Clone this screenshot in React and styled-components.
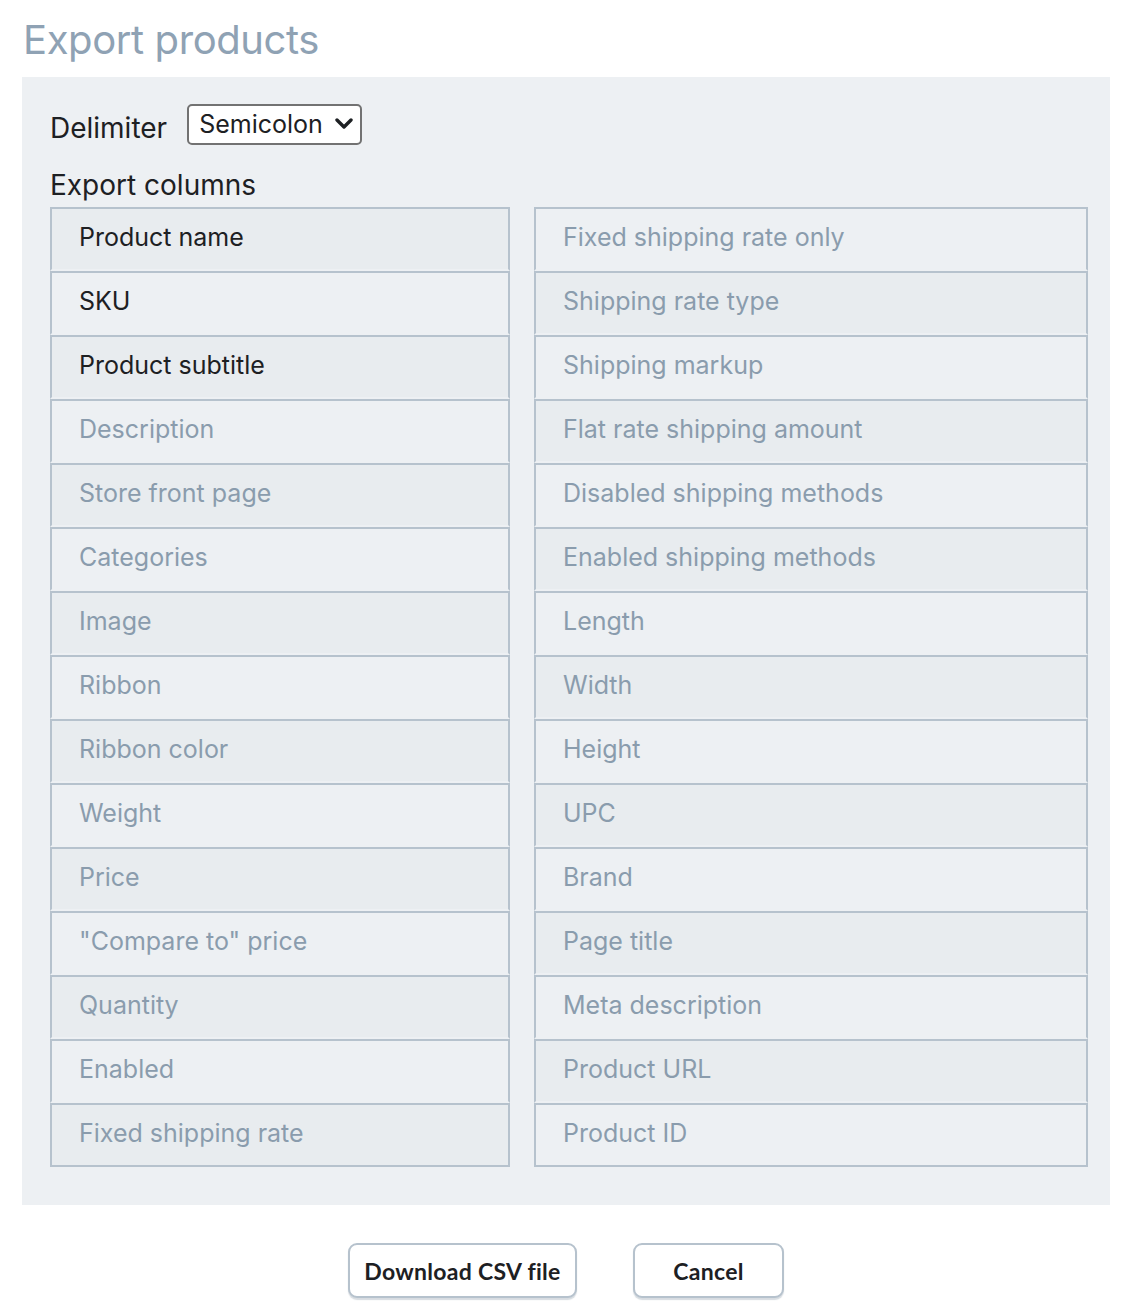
import React from 'react';
import styled, { createGlobalStyle } from 'styled-components';

const GlobalStyle = createGlobalStyle`
  * { box-sizing: border-box; }
  body {
    margin: 0;
    background: #fff;
    font-family: Inter, "Noto Sans", "Liberation Sans", sans-serif;
    color: #1d2023;
  }
`;

const columns = [
  { name: 'Product name', on: true },
  { name: 'SKU', on: true },
  { name: 'Product subtitle', on: true },
  { name: 'Description' },
  { name: 'Store front page' },
  { name: 'Categories' },
  { name: 'Image' },
  { name: 'Ribbon' },
  { name: 'Ribbon color' },
  { name: 'Weight' },
  { name: 'Price' },
  { name: '"Compare to" price' },
  { name: 'Quantity' },
  { name: 'Enabled' },
  { name: 'Fixed shipping rate' },
  { name: 'Fixed shipping rate only' },
  { name: 'Shipping rate type' },
  { name: 'Shipping markup' },
  { name: 'Flat rate shipping amount' },
  { name: 'Disabled shipping methods' },
  { name: 'Enabled shipping methods' },
  { name: 'Length' },
  { name: 'Width' },
  { name: 'Height' },
  { name: 'UPC' },
  { name: 'Brand' },
  { name: 'Page title' },
  { name: 'Meta description' },
  { name: 'Product URL' },
  { name: 'Product ID' },
];

const Chevron = () => (
  <svg width="18" height="12" viewBox="0 0 18 12" fill="none">
    <polyline points="2,2 9,9 16,2" stroke="#1d2023" strokeWidth="3.4" strokeLinecap="round" strokeLinejoin="round" />
  </svg>
);

const App = () => (
  <Page>
    <GlobalStyle />
    <Title>Export products</Title>
    <Panel>
      <DelimiterRow>
        <Label>Delimiter</Label>
        <Select>
          <span>Semicolon</span>
          <Chevron />
        </Select>
      </DelimiterRow>
      <SectionTitle>Export columns</SectionTitle>
      <ColumnGrid>
        {columns.map((c) => (
          <ColumnItem key={c.name} active={c.on}>
            {c.name}
          </ColumnItem>
        ))}
      </ColumnGrid>
    </Panel>
    <Actions>
      <Button>Download CSV file</Button>
      <Button wide>Cancel</Button>
    </Actions>
  </Page>
);

export default App;

const Page = styled.div`
  width: 1134px;
  padding: 0 24px 14px 22px;
`;

const Title = styled.h1`
  margin: 0;
  padding: 12px 0 0 1px;
  height: 77px;
  font-size: 40px;
  font-weight: 400;
  line-height: 56px;
  color: #8fa2b4;
  letter-spacing: -0.4px;
`;

const Panel = styled.div`
  background: #edf0f3;
  padding: 27px 22px 38px 28px;
`;

const DelimiterRow = styled.div`
  display: flex;
  align-items: center;
  gap: 20px;
  height: 40px;
`;

const Label = styled.span`
  font-size: 28px;
  line-height: 40px;
  padding-top: 8px;
  color: #1d2023;
`;

const Select = styled.div`
  display: flex;
  align-items: center;
  justify-content: space-between;
  width: 175px;
  height: 41px;
  padding: 0 7px 0 10px;
  background: #fff;
  border: 2px solid #727272;
  border-radius: 5px;
  font-size: 25px;
  color: #1d2023;
`;

const SectionTitle = styled.div`
  font-size: 28px;
  line-height: 36px;
  margin-top: 23px;
  height: 27px;
  color: #1d2023;
`;

const ColumnGrid = styled.div`
  display: grid;
  grid-template-columns: 460px 554px;
  grid-template-rows: repeat(15, 64px);
  grid-auto-flow: column;
  column-gap: 24px;
  margin-top: 13px;
`;

const ColumnItem = styled.div`
  display: flex;
  align-items: center;
  padding: 0 0 4px 27px;
  border: 2px solid #b6c2cd;
  border-bottom-color: #edf0f3;
  background: #edf0f3;
  font-size: 25px;
  color: ${({ active }) => (active ? '#1d2023' : '#8a9cad')};

  &:nth-child(odd) {
    background: #e8ecef;
  }

  &:nth-child(15),
  &:nth-child(30) {
    border-bottom-color: #b6c2cd;
  }
`;

const Actions = styled.div`
  display: flex;
  justify-content: center;
  gap: 56px;
  margin-top: 38px;
`;

const Button = styled.button`
  height: 55px;
  min-width: ${({ wide }) => (wide ? '151px' : '229px')};
  padding: 0 14px;
  background: #fff;
  border: 2px solid #b6c2cd;
  border-radius: 9px;
  box-shadow: 0 2px 1px rgba(140, 155, 170, 0.35);
  font-family: Lato, Inter, sans-serif;
  font-weight: 700;
  font-size: 23px;
  letter-spacing: 0.3px;
  color: #1d2023;
  cursor: pointer;
`;
